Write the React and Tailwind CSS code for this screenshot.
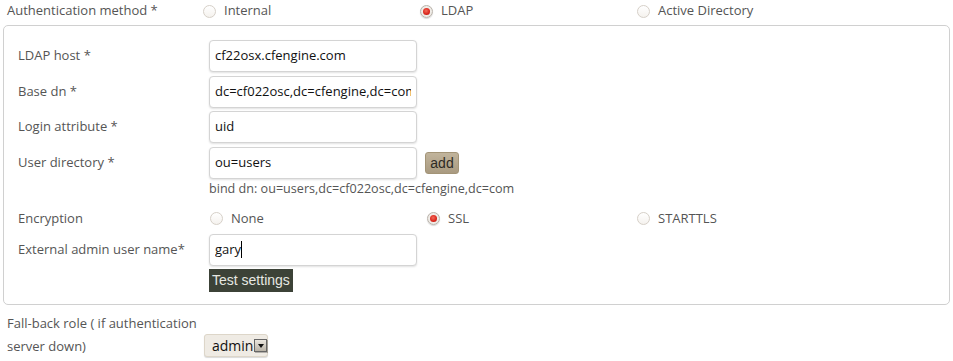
import React from "react";

function Radio({ checked, label }) {
  return (
    <label className="flex items-center gap-[8px] cursor-pointer">
      {checked ? (
        <span className="w-[13px] h-[13px] rounded-full border border-[#b9b3ab] bg-[radial-gradient(circle_at_50%_45%,#f7f4f0_0%,#e9e4de_100%)] flex items-center justify-center shadow-[0_1px_1px_rgba(0,0,0,0.15)]">
          <span className="w-[7px] h-[7px] rounded-full bg-[radial-gradient(circle_at_45%_40%,#f36b5a_0%,#d9241a_60%,#a81610_100%)]" />
        </span>
      ) : (
        <span className="w-[13px] h-[13px] rounded-full border border-[#d6d0c8] bg-[linear-gradient(#ffffff,#f5f2ee)]" />
      )}
      <span>{label}</span>
    </label>
  );
}

function Field({ label, value, children, cursor }) {
  return (
    <div className="flex items-center h-[32px]">
      <div className="w-[191px] shrink-0">{label}</div>
      <div className="w-[208px] h-[32px] rounded-[4px] border border-[#d4d4d4] bg-white shadow-[0_1px_2px_rgba(0,0,0,0.12)] flex items-center px-[5px] text-[#111]">
        <div className="flex-1 overflow-hidden whitespace-nowrap flex items-center">
          {value}
          {cursor && <span className="inline-block w-px h-[17px] bg-black" />}
        </div>
      </div>
      {children}
    </div>
  );
}

export default function App() {
  return (
    <div className="w-[953px] h-[361px] bg-white text-[13px] text-[#555] font-['Open_Sans',sans-serif] overflow-hidden">
      <div className="flex items-center h-[22px] pl-[7px]">
        <div className="w-[196px] shrink-0">Authentication method *</div>
        <div className="w-[217px]">
          <Radio label="Internal" />
        </div>
        <div className="w-[217px]">
          <Radio checked label="LDAP" />
        </div>
        <div>
          <Radio label="Active Directory" />
        </div>
      </div>

      <div className="mx-[3px] mt-[3px] h-[280px] border border-[#d0d0d0] rounded-[5px] pl-[14px] pt-[14px]">
        <div className="flex flex-col gap-[3.5px]">
          <Field label="LDAP host *" value="cf22osx.cfengine.com" />
          <Field label="Base dn *" value="dc=cf022osc,dc=cfengine,dc=com" />
          <Field label="Login attribute *" value="uid" />
          <Field label="User directory *" value="ou=users">
            <button className="ml-[8px] mt-[1px] w-[34px] h-[22px] rounded-[3px] border border-[#a39477] bg-[linear-gradient(#c1b49c,#a99a80)] font-['Liberation_Sans',sans-serif] text-[14px] text-[#2d2a24] leading-none">
              add
            </button>
          </Field>
        </div>
        <div className="pl-[191px] mt-[2px] h-[16px] leading-[16px] text-[12.6px]">
          bind dn: ou=users,dc=cf022osc,dc=cfengine,dc=com
        </div>
        <div className="flex items-center h-[22px] mt-[11px]">
          <div className="w-[192px] shrink-0">Encryption</div>
          <div className="w-[217px]">
            <Radio label="None" />
          </div>
          <div className="w-[210px]">
            <Radio checked label="SSL" />
          </div>
          <div>
            <Radio label="STARTTLS" />
          </div>
        </div>
        <div className="mt-[4px]">
          <Field label="External admin user name*" value="gary" cursor />
        </div>
        <div className="pl-[191px] mt-[3px]">
          <button className="h-[23px] px-[3px] bg-[#3c4237] text-[#e6e8e2] font-['Liberation_Sans',sans-serif] text-[14px] leading-[23px]">
            Test settings
          </button>
        </div>
      </div>

      <div className="flex items-end pl-[7px] mt-[7px]">
        <div className="w-[190px] shrink-0 leading-[23px]">
          Fall-back role ( if authentication server down)
        </div>
        <div className="ml-[7px] mb-[1px] h-[23px] w-[64px] rounded-[3px] border border-[#ddd6c9] bg-[#efebe4] shadow-[0_1px_1px_rgba(0,0,0,0.15)] flex items-center pl-[7px] text-[#111] text-[14px]">
          <span>admin</span>
          <span className="ml-[1px] w-[13px] h-[13px] border border-[#666] bg-[linear-gradient(#ebe7df,#b8b2a6)] shadow-[1px_1px_0_rgba(0,0,0,0.25)] flex items-center justify-center">
            <span className="w-0 h-0 border-l-[3px] border-r-[3px] border-t-[4px] border-l-transparent border-r-transparent border-t-[#111]" />
          </span>
        </div>
      </div>
    </div>
  );
}
